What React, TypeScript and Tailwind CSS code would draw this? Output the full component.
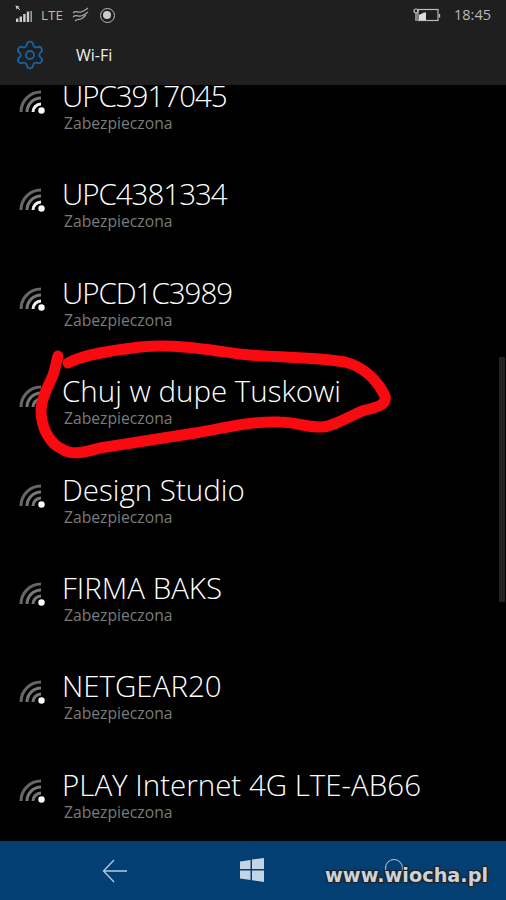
import { Settings } from "lucide-react";

const networks = [
  { name: "UPC3917045", strong: true, digits: true },
  { name: "UPC4381334", strong: true, digits: true },
  { name: "UPCD1C3989", strong: true, digits: true },
  { name: "Chuj w dupe Tuskowi", strong: false, digits: false },
  { name: "Design Studio", strong: false, digits: false },
  { name: "FIRMA BAKS", strong: false, digits: false },
  { name: "NETGEAR20", strong: false, digits: false },
  { name: "PLAY Internet 4G LTE-AB66", strong: false, digits: false },
];

function WifiIcon({ strong }: { strong: boolean }) {
  return (
    <svg width="28" height="26" viewBox="0 0 28 26" fill="none" className="shrink-0">
      <path d="M3 23A20 20 0 0 1 23 3" stroke="#666" strokeWidth="3" />
      <path d="M9 23A14 14 0 0 1 23 9" stroke="#777" strokeWidth="3" />
      <path d="M15 23A8 8 0 0 1 23 15" stroke={strong ? "#eee" : "#777"} strokeWidth="3" />
      <circle cx="23.5" cy="21.5" r="3.2" fill="#fff" />
    </svg>
  );
}

function SignalBars() {
  return (
    <svg width="20" height="20" viewBox="0 0 20 20" fill="#ccc">
      <path d="M0.5 0.5l4 1-3 3z" />
      <path d="M2 2l3 3" stroke="#ccc" />
      <rect x="1" y="13.5" width="2.4" height="3.5" />
      <rect x="4.6" y="11.5" width="2.4" height="5.5" />
      <rect x="8.2" y="9" width="2.4" height="8" />
      <rect x="11.8" y="6.5" width="2.4" height="10.5" />
      <rect x="15.4" y="6" width="1.6" height="11" fill="#999" />
    </svg>
  );
}

function Waves() {
  return (
    <svg width="18" height="16" viewBox="0 0 18 16" fill="none" stroke="#aaa" strokeWidth="1.2">
      <path d="M1 6c3-3 5 0 8-1s4-2 7-4" />
      <path d="M1 10c3-3 5 0 8-1s4-2 7-4" />
      <path d="M3 14c3-3 4-1 6-2s3-2 5-4" />
    </svg>
  );
}

function Battery() {
  return (
    <svg width="28" height="16" viewBox="0 0 28 16" fill="none">
      <circle cx="3" cy="4" r="2" stroke="#ccc" strokeWidth="1.2" />
      <path d="M3 6v8" stroke="#ccc" strokeWidth="1.2" />
      <rect x="5" y="2.5" width="20" height="11" stroke="#bbb" strokeWidth="1.2" />
      <path d="M26.5 7v3.5" stroke="#bbb" strokeWidth="1.4" />
      <path d="M6 13V8l5-2.5H13V13z" fill="#ddd" />
    </svg>
  );
}

function Header() {
  return (
    <div className="h-[85px] shrink-0 bg-[#1f1f1f]">
      <div className="flex h-[30px] items-center pl-[15px] pr-[15px] text-[#b9b9b9]">
        <SignalBars />
        <span className="ml-[6px] text-[13.5px]">LTE</span>
        <span className="ml-[9px] flex">
          <Waves />
        </span>
        <span className="ml-[10px] flex h-[15px] w-[15px] items-center justify-center rounded-full border border-[#bbb]">
          <span className="h-[8px] w-[8px] rounded-full bg-[#ccc]" />
        </span>
        <span className="ml-auto flex items-center gap-[13px]">
          <Battery />
          <span className="text-[14.5px]">18:45</span>
        </span>
      </div>
      <div className="flex h-[50px] items-center pl-[14px]">
        <Settings size={32} strokeWidth={1.4} className="text-[#17629f]" />
        <span className="ml-[30px] text-[16px] text-[#eee]">Wi-Fi</span>
      </div>
    </div>
  );
}

function NetworkRow({ name, strong, digits }: { name: string; strong: boolean; digits: boolean }) {
  return (
    <div className="flex h-[98.4px] shrink-0 items-start pl-[18px]">
      <div className="mt-[11px]">
        <WifiIcon strong={strong} />
      </div>
      <div className="ml-[16px] flex flex-col pt-[1px]">
        <span className={digits ? "text-[29.5px] leading-[34px] font-light tracking-[-1px] whitespace-nowrap text-white" : "text-[29.5px] leading-[34px] font-light whitespace-nowrap text-white"}>
          {name}
        </span>
        <span className="ml-[2px] text-[15.7px] leading-[20px] text-[#7b7b7b]">Zabezpieczona</span>
      </div>
    </div>
  );
}

export default function App() {
  return (
    <div className="relative flex h-[900px] w-[506px] flex-col overflow-hidden bg-black font-['Open_Sans',sans-serif]">
      <Header />
      <div className="flex flex-1 flex-col overflow-hidden">
        <div className="mt-[-7px] flex flex-col">
          {networks.map((n) => (
            <NetworkRow key={n.name} name={n.name} strong={n.strong} digits={n.digits} />
          ))}
        </div>
      </div>
      <div className="relative flex h-[59px] shrink-0 items-center bg-[#033f72]">
        <svg width="26" height="24" viewBox="0 0 26 24" fill="none" stroke="#b8cbdc" strokeWidth="1.3" className="absolute left-[102px] top-[18px]">
          <path d="M12 1L1.5 12 12 23M1.5 12H25" />
        </svg>
        <svg width="24" height="24" viewBox="0 0 24 24" fill="#c3d5e4" className="absolute left-[240px] top-[17px]">
          <path d="M0 3.5l10.5-1.6V11H0zM12 1.6L24 0v11H12zM0 12.5h10.5v9.6L0 20.5zM12 12.5h12V24l-12-1.7z" />
        </svg>
        <span className="absolute left-[385px] top-[18px] h-[18px] w-[18px] rounded-full border border-[#b8cbdc]" />
      </div>
      {/* scrollbar */}
      <div className="absolute left-[499px] top-[357px] h-[245px] w-[6px] bg-[#222]" />
      {/* red marker scribble */}
      <svg width="506" height="900" viewBox="0 0 506 900" fill="none" className="pointer-events-none absolute inset-0">
        <path
          d="M68 363C85 354 115 350 140 347C175 344 205 349 240 354C275 358 310 356 345 362C365 367 378 382 385 396C387 405 378 407 362 411C348 417 333 427 320 427C305 427 295 422 280 422C250 421 225 428 195 433C165 438 130 443 100 448C85 452 72 456 62 449C50 444 41 428 41 410C42 393 50 385 54 372L58 356"
          stroke="#f80a10"
          strokeWidth="11"
          strokeLinecap="round"
          strokeLinejoin="round"
        />
      </svg>
      <span className="absolute left-[325px] top-[861px] text-[19.3px] leading-[30px] font-bold font-['DejaVu_Sans',sans-serif] whitespace-nowrap text-[#c9d3dc] [text-shadow:1px_1px_1px_#222,-1px_-1px_1px_#222,1px_-1px_1px_#222,-1px_1px_1px_#222]">
        www.wiocha.pl
      </span>
    </div>
  );
}
